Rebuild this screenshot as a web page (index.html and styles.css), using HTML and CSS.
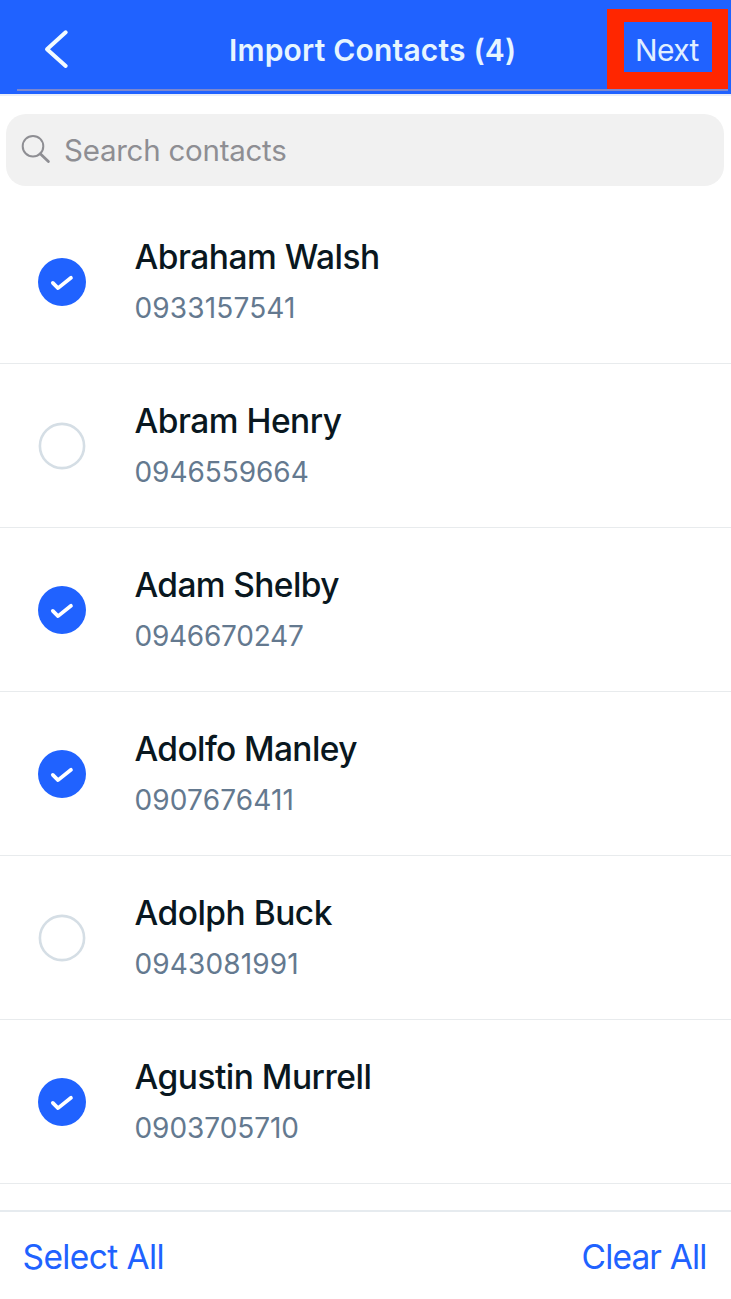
FILE: index.html
```html
<!DOCTYPE html>
<html lang="en">
<head>
<meta charset="utf-8">
<title>Import Contacts</title>
<link rel="stylesheet" href="styles.css">
</head>
<body>
<svg class="defs" width="0" height="0" aria-hidden="true">
  <symbol id="checked" viewBox="0 0 48 48"><circle cx="24" cy="24" r="24" fill="#2062ff"/><path d="M14.8 24.9l5.2 5.2L33 19.8" fill="none" stroke="#fff" stroke-width="3.7" stroke-linecap="round" stroke-linejoin="round"/></symbol>
  <symbol id="unchecked" viewBox="0 0 48 48"><circle cx="24" cy="24" r="22.1" fill="#fff" stroke="#d5dee5" stroke-width="2.6"/></symbol>
</svg>
<div class="app">
  <header class="header">
    <svg class="back" width="30" height="44" viewBox="0 0 30 44"><path d="M26.7 5.3L8 22.2l18.7 16.8" fill="none" stroke="#f2fbff" stroke-width="4" stroke-linecap="round" stroke-linejoin="round"/></svg>
    <h1 class="title">Import Contacts (4)</h1>
    <div class="next">Next</div>
    <div class="header-line"></div>
  </header>
  <div class="search">
    <svg class="search-icon" width="32" height="32" viewBox="0 0 32 32" fill="none" stroke="#8e8e93"><circle cx="13" cy="12.2" r="10.3" stroke-width="2"/><path d="M20.3 19.8l8.1 7.7" stroke-width="2.8" stroke-linecap="round"/></svg>
    <span class="placeholder">Search contacts</span>
  </div>
  <main class="list">
    <div class="row"><svg class="mark"><use href="#checked"/></svg><div><div class="name">Abraham Walsh</div><div class="phone wide">0933157541</div></div></div>
    <div class="row"><svg class="mark"><use href="#unchecked"/></svg><div><div class="name">Abram Henry</div><div class="phone">0946559664</div></div></div>
    <div class="row"><svg class="mark"><use href="#checked"/></svg><div><div class="name snug">Adam Shelby</div><div class="phone tight">0946670247</div></div></div>
    <div class="row"><svg class="mark"><use href="#checked"/></svg><div><div class="name snug">Adolfo Manley</div><div class="phone wide">0907676411</div></div></div>
    <div class="row"><svg class="mark"><use href="#unchecked"/></svg><div><div class="name">Adolph Buck</div><div class="phone wide">0943081991</div></div></div>
    <div class="row"><svg class="mark"><use href="#checked"/></svg><div><div class="name">Agustin Murrell</div><div class="phone">0903705710</div></div></div>
  </main>
  <footer class="footer"><span class="select-all">Select All</span><span class="clear-all">Clear All</span></footer>
</div>
</body>
</html>
```
FILE: styles.css
```css
* { box-sizing: border-box; }
body { margin: 0; background: #fff; font-family: Inter, "Liberation Sans", sans-serif; white-space: nowrap; }
.defs { position: absolute; }
.app { width: 731px; height: 1299px; display: flex; flex-direction: column; overflow: hidden; }
.header { position: relative; flex: none; height: 96px; background: #2062ff; border-bottom: 2px solid #e9eef8; display: flex; align-items: flex-start; }
.back { margin: 27px 0 0 39px; }
.title { margin: 30px 0 0 160px; width: 300px; font-size: 30px; line-height: 40px; font-weight: 600; letter-spacing: .19px; color: #e6f5ff; }
.next { position: relative; z-index: 1; margin: 9px 3px 0 auto; width: 121px; height: 80px; border: solid #ff2600; border-width: 13px 16px 17px 17px; padding-left: 11px; font-size: 30px; line-height: 56px; letter-spacing: -.6px; color: #e0efff; }
.header-line { position: absolute; left: 17px; right: 3px; top: 89px; height: 2px; background: #7b87d0; }
.search { flex: none; height: 72px; margin: 18px 7px 14px 6px; border-radius: 20px; background: #f1f1f1; display: flex; align-items: center; padding-left: 14px; color: #8e8e93; }
.placeholder { margin: 0 0 1px 12px; font-size: 29.5px; letter-spacing: -.25px; }
.list { flex: none; height: 1010px; }
.row { height: 164px; border-bottom: 1px solid #e8ebed; display: flex; padding: 32px 0 0 38px; }
.mark { flex: none; width: 48px; height: 48px; margin: 26px 48.5px 0 0; }
.name { font-size: 33.5px; line-height: 51px; font-weight: 500; letter-spacing: -.5px; color: #091720; }
.name.snug { letter-spacing: -.62px; }
.phone { font-size: 28px; line-height: 50px; letter-spacing: -.05px; color: #64798f; }
.phone.wide { letter-spacing: .15px; }
.phone.tight { letter-spacing: -.25px; }
.footer { flex: 1; border-top: 2px solid #e6ebef; display: flex; justify-content: space-between; padding: 0 24.5px 0 22.5px; font-size: 33.5px; line-height: 90px; letter-spacing: -.6px; color: #2062ff; }
.clear-all { letter-spacing: -.85px; }
```
